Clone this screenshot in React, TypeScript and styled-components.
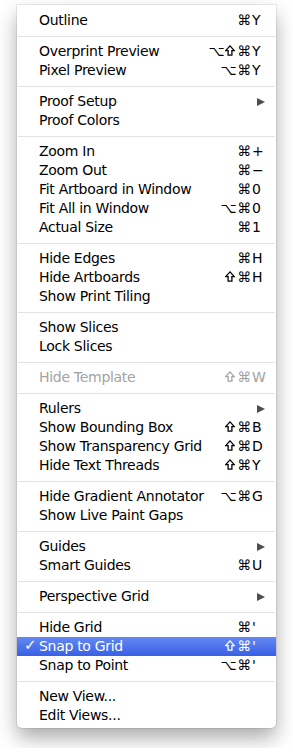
import styled, { createGlobalStyle } from "styled-components";

const GlobalStyle = createGlobalStyle`
  html, body {
    margin: 0;
    padding: 0;
    background: #fff;
  }
  body {
    font-family: "DejaVu Sans", "Liberation Sans", sans-serif;
  }
`;

const Page = styled.div`
  padding: 5px 0 20px 17px;
`;

const Menu = styled.div`
  width: 259px;
  background: #fff;
  padding: 6px 0 3px;
  border-radius: 0 0 5px 5px;
  box-shadow: 0 0 0 1px rgba(0, 0, 0, 0.07), 0 10px 20px rgba(0, 0, 0, 0.33);
`;

const Row = styled.div<{ $active?: boolean; $disabled?: boolean }>`
  position: relative;
  display: flex;
  align-items: center;
  box-sizing: border-box;
  height: 19px;
  padding: 0 14px 2px 22px;
  font-size: 14px;
  letter-spacing: -0.3px;
  color: ${(p) => (p.$disabled ? "#a3a3a3" : p.$active ? "#fff" : "#000")};
  background: ${(p) =>
    p.$active ? "linear-gradient(#6488f2, #3860e6)" : "transparent"};
`;

const Check = styled.span`
  position: absolute;
  left: 7px;
  top: -1px;
  font-size: 15px;
  font-weight: bold;
`;

const Label = styled.span`
  flex: 1;
  white-space: nowrap;
`;

const Shortcut = styled.span`
  display: flex;
  align-items: center;
`;

const Mods = styled.span`
  display: flex;
  align-items: center;
  gap: 1px;
`;

const Key = styled.span`
  width: 10px;
  margin-left: 1px;
  text-align: left;
`;

const ShiftSvg = styled.svg`
  width: 10px;
  height: 11px;
  margin-right: 1px;
`;

const Arrow = styled.span`
  width: 0;
  height: 0;
  margin: 2px -3px 0 0;
  border-top: 4.5px solid transparent;
  border-bottom: 4.5px solid transparent;
  border-left: 8px solid #4d4d4d;
`;

const Separator = styled.div`
  height: 12px;
  display: flex;
  align-items: center;
  &::after {
    content: "";
    flex: 1;
    height: 1px;
    margin: 0 1px;
    background: #e2e2e2;
  }
`;

function Shift() {
  return (
    <ShiftSvg viewBox="0 0 10 11">
      <path
        d="M5 0.9 L9.3 5.6 H6.9 V10.2 H3.1 V5.6 H0.7 Z"
        fill="none"
        stroke="currentColor"
        strokeWidth="1.3"
        strokeLinejoin="miter"
      />
    </ShiftSvg>
  );
}

type Item = {
  label: string;
  mods?: string;
  key?: string;
  sub?: boolean;
  disabled?: boolean;
  active?: boolean;
  checked?: boolean;
};

const sections: Item[][] = [
  [{ label: "Outline", mods: "⌘", key: "Y" }],
  [
    { label: "Overprint Preview", mods: "⌥⇧⌘", key: "Y" },
    { label: "Pixel Preview", mods: "⌥⌘", key: "Y" },
  ],
  [{ label: "Proof Setup", sub: true }, { label: "Proof Colors" }],
  [
    { label: "Zoom In", mods: "⌘", key: "+" },
    { label: "Zoom Out", mods: "⌘", key: "−" },
    { label: "Fit Artboard in Window", mods: "⌘", key: "0" },
    { label: "Fit All in Window", mods: "⌥⌘", key: "0" },
    { label: "Actual Size", mods: "⌘", key: "1" },
  ],
  [
    { label: "Hide Edges", mods: "⌘", key: "H" },
    { label: "Hide Artboards", mods: "⇧⌘", key: "H" },
    { label: "Show Print Tiling" },
  ],
  [{ label: "Show Slices" }, { label: "Lock Slices" }],
  [{ label: "Hide Template", mods: "⇧⌘", key: "W", disabled: true }],
  [
    { label: "Rulers", sub: true },
    { label: "Show Bounding Box", mods: "⇧⌘", key: "B" },
    { label: "Show Transparency Grid", mods: "⇧⌘", key: "D" },
    { label: "Hide Text Threads", mods: "⇧⌘", key: "Y" },
  ],
  [
    { label: "Hide Gradient Annotator", mods: "⌥⌘", key: "G" },
    { label: "Show Live Paint Gaps" },
  ],
  [
    { label: "Guides", sub: true },
    { label: "Smart Guides", mods: "⌘", key: "U" },
  ],
  [{ label: "Perspective Grid", sub: true }],
  [
    { label: "Hide Grid", mods: "⌘", key: "'" },
    { label: "Snap to Grid", mods: "⇧⌘", key: "'", active: true, checked: true },
    { label: "Snap to Point", mods: "⌥⌘", key: "'" },
  ],
  [{ label: "New View..." }, { label: "Edit Views..." }],
];

export default function App() {
  return (
    <Page>
      <GlobalStyle />
      <Menu>
        {sections.map((items, i) => (
          <div key={i}>
            {i > 0 && <Separator />}
            {items.map((it) => (
              <Row key={it.label} $active={it.active} $disabled={it.disabled}>
                {it.checked && <Check>✓</Check>}
                <Label>{it.label}</Label>
                {it.sub && <Arrow />}
                {it.key && (
                  <Shortcut>
                    <Mods>
                      {Array.from(it.mods ?? "").map((m, j) =>
                        m === "⇧" ? <Shift key={j} /> : <span key={j}>{m}</span>
                      )}
                    </Mods>
                    <Key>{it.key}</Key>
                  </Shortcut>
                )}
              </Row>
            ))}
          </div>
        ))}
      </Menu>
    </Page>
  );
}
